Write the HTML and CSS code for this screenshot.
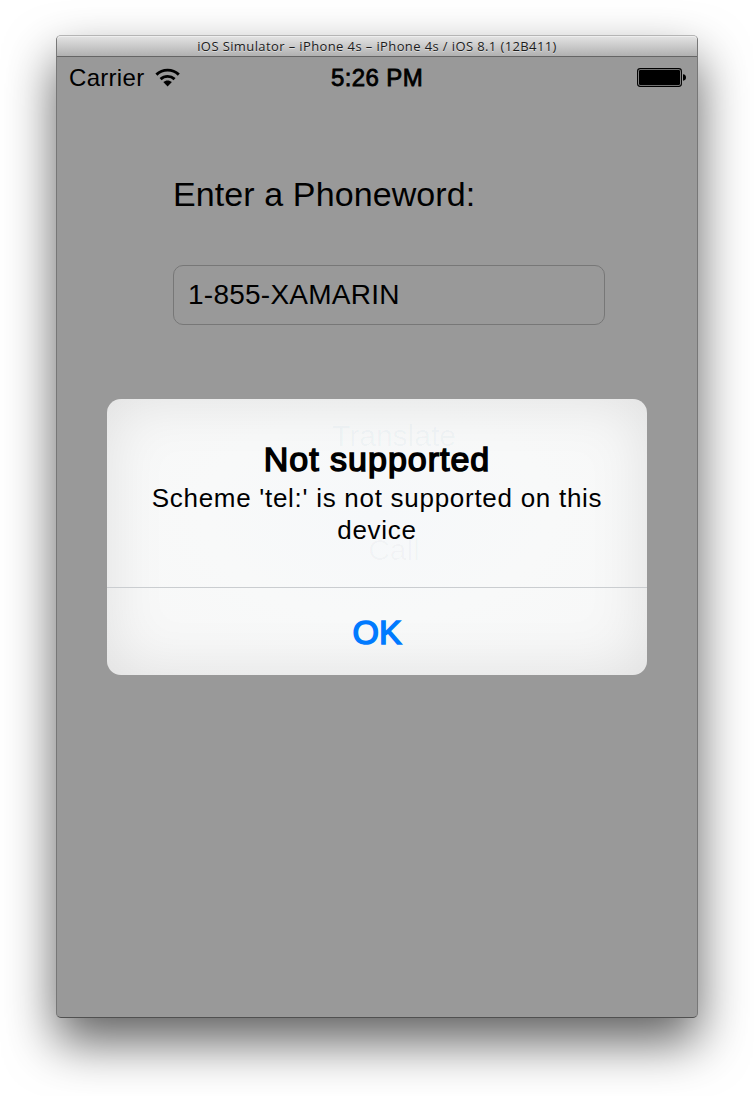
FILE: index.html
```html
<!DOCTYPE html>
<html lang="en">
<head>
<meta charset="utf-8">
<title>iOS Simulator</title>
<link rel="stylesheet" href="styles.css">
</head>
<body>
<div class="window">
  <header class="titlebar"><span class="titlebar-text">iOS Simulator – iPhone 4s – iPhone 4s / iOS 8.1 (12B411)</span></header>
  <main class="screen">
    <div class="status">
      <div class="carrier">
        <span class="carrier-name">Carrier</span>
        <svg class="wifi" width="26" height="20" viewBox="0 0 26 20">
          <path d="M1.4 6.6C7.7.6 17.5.6 23.8 6.6M5.6 11.1c4-3.7 10-3.7 14 0" fill="none" stroke="#000" stroke-width="2.9"/>
          <path d="M8.3 14.1c2.5-2.2 6.1-2.2 8.6 0L12.6 18.6z"/>
        </svg>
      </div>
      <span class="time">5:26 PM</span>
      <svg class="battery" width="50" height="20" viewBox="0 0 50 20">
        <rect x=".6" y=".6" width="43.8" height="17.8" rx="2.6" fill="none" stroke="#000" stroke-width="1.1"/>
        <rect x="2" y="2" width="41" height="15" rx="1.2"/>
        <path d="M46 6.3c2 .2 3 1.5 3 3.2s-1 3-3 3.2z"/>
      </svg>
    </div>
    <div class="form">
      <label class="prompt">Enter a Phoneword:</label>
      <div class="field"><span class="field-text">1-855-XAMARIN</span></div>
    </div>
    <section class="alert">
      <div class="behind"><span class="ghost ghost-blue">Translate</span><span class="ghost">Call</span></div>
      <div class="message">
        <h1 class="alert-title">Not supported</h1>
        <p class="alert-text">Scheme 'tel:' is not supported on this<br>device</p>
      </div>
      <div class="action"><span class="ok">OK</span></div>
    </section>
  </main>
</div>
</body>
</html>
```
FILE: styles.css
```css
* { box-sizing: border-box; }
body {
  margin: 0;
  padding: 35px 56px 0;
  height: 1096px;
  overflow: hidden;
  background: #fff;
  color: #000;
  font-family: "Liberation Sans", Arial, sans-serif;
}
.window {
  width: 642px;
  height: 983px;
  border: 1px solid #777;
  border-top-color: #b5b5b5;
  border-bottom-color: #505050;
  border-radius: 5px;
  background: #999;
  box-shadow: 0 24px 50px rgba(0, 0, 0, .62);
}
.titlebar {
  height: 21px;
  border-bottom: 1px solid #656565;
  border-radius: 4px 4px 0 0;
  background: linear-gradient(#e4e4e4, #b1b1b1);
  box-shadow: inset 0 1px #eee;
  display: flex;
  justify-content: center;
  font: 13px/20px "Open Sans", "Noto Sans", sans-serif;
  letter-spacing: .39px;
  color: #1c1c1c;
  text-shadow: 0 1px rgba(255, 255, 255, .45);
  white-space: nowrap;
}
.status {
  display: grid;
  grid-template-columns: 1fr auto 1fr;
  height: 40px;
  padding: 1px 10px 0 12px;
  align-items: center;
  font-size: 24px;
  line-height: 39px;
}
.carrier { display: flex; align-items: center; gap: 11px; }
.carrier-name { letter-spacing: .3px; }
.time { margin-left: -2px; letter-spacing: .4px; -webkit-text-stroke: .8px #000; }
.battery { justify-self: end; }
.form { padding: 77px 92px 0 116px; }
.prompt {
  display: block;
  height: 91px;
  font-size: 34px;
  line-height: 40px;
  letter-spacing: .1px;
}
.field {
  height: 60px;
  padding-left: 14px;
  border: 1px solid #777;
  border-radius: 10px;
  font-size: 28px;
  line-height: 58px;
  letter-spacing: .25px;
}
.alert {
  position: relative;
  width: 540px;
  height: 276px;
  margin: 74px 50px 0;
  border-radius: 14px;
  overflow: hidden;
  background: radial-gradient(ellipse at 50% 42%, #f6f8fa 0, #f8f9f9 45%, #f7f7f7 100%);
  box-shadow: inset 0 0 60px rgba(0, 0, 0, .1);
  text-align: center;
}
.behind {
  position: absolute;
  inset: 17px 0 auto;
  padding-left: 34px;
  display: flex;
  flex-direction: column;
  gap: 74px;
  font-size: 30px;
  line-height: 40px;
}
.ghost { color: rgba(70, 80, 90, .03); }
.ghost-blue { color: rgba(0, 90, 150, .035); }
.message {
  position: relative;
  height: 189px;
  padding-top: 40px;
  border-bottom: 1px solid #cacdd0;
}
.alert-title {
  margin: 0;
  font-size: 34px;
  line-height: 40px;
  font-weight: 400;
  letter-spacing: 1px;
  -webkit-text-stroke: 1.5px #000;
}
.alert-text {
  margin: 3px 0 0;
  font-size: 26px;
  line-height: 32px;
  letter-spacing: .72px;
}
.action {
  position: relative;
  height: 87px;
  font-size: 34px;
  line-height: 88px;
  color: #007aff;
}
.ok { -webkit-text-stroke: 1.5px #007aff; }
```
